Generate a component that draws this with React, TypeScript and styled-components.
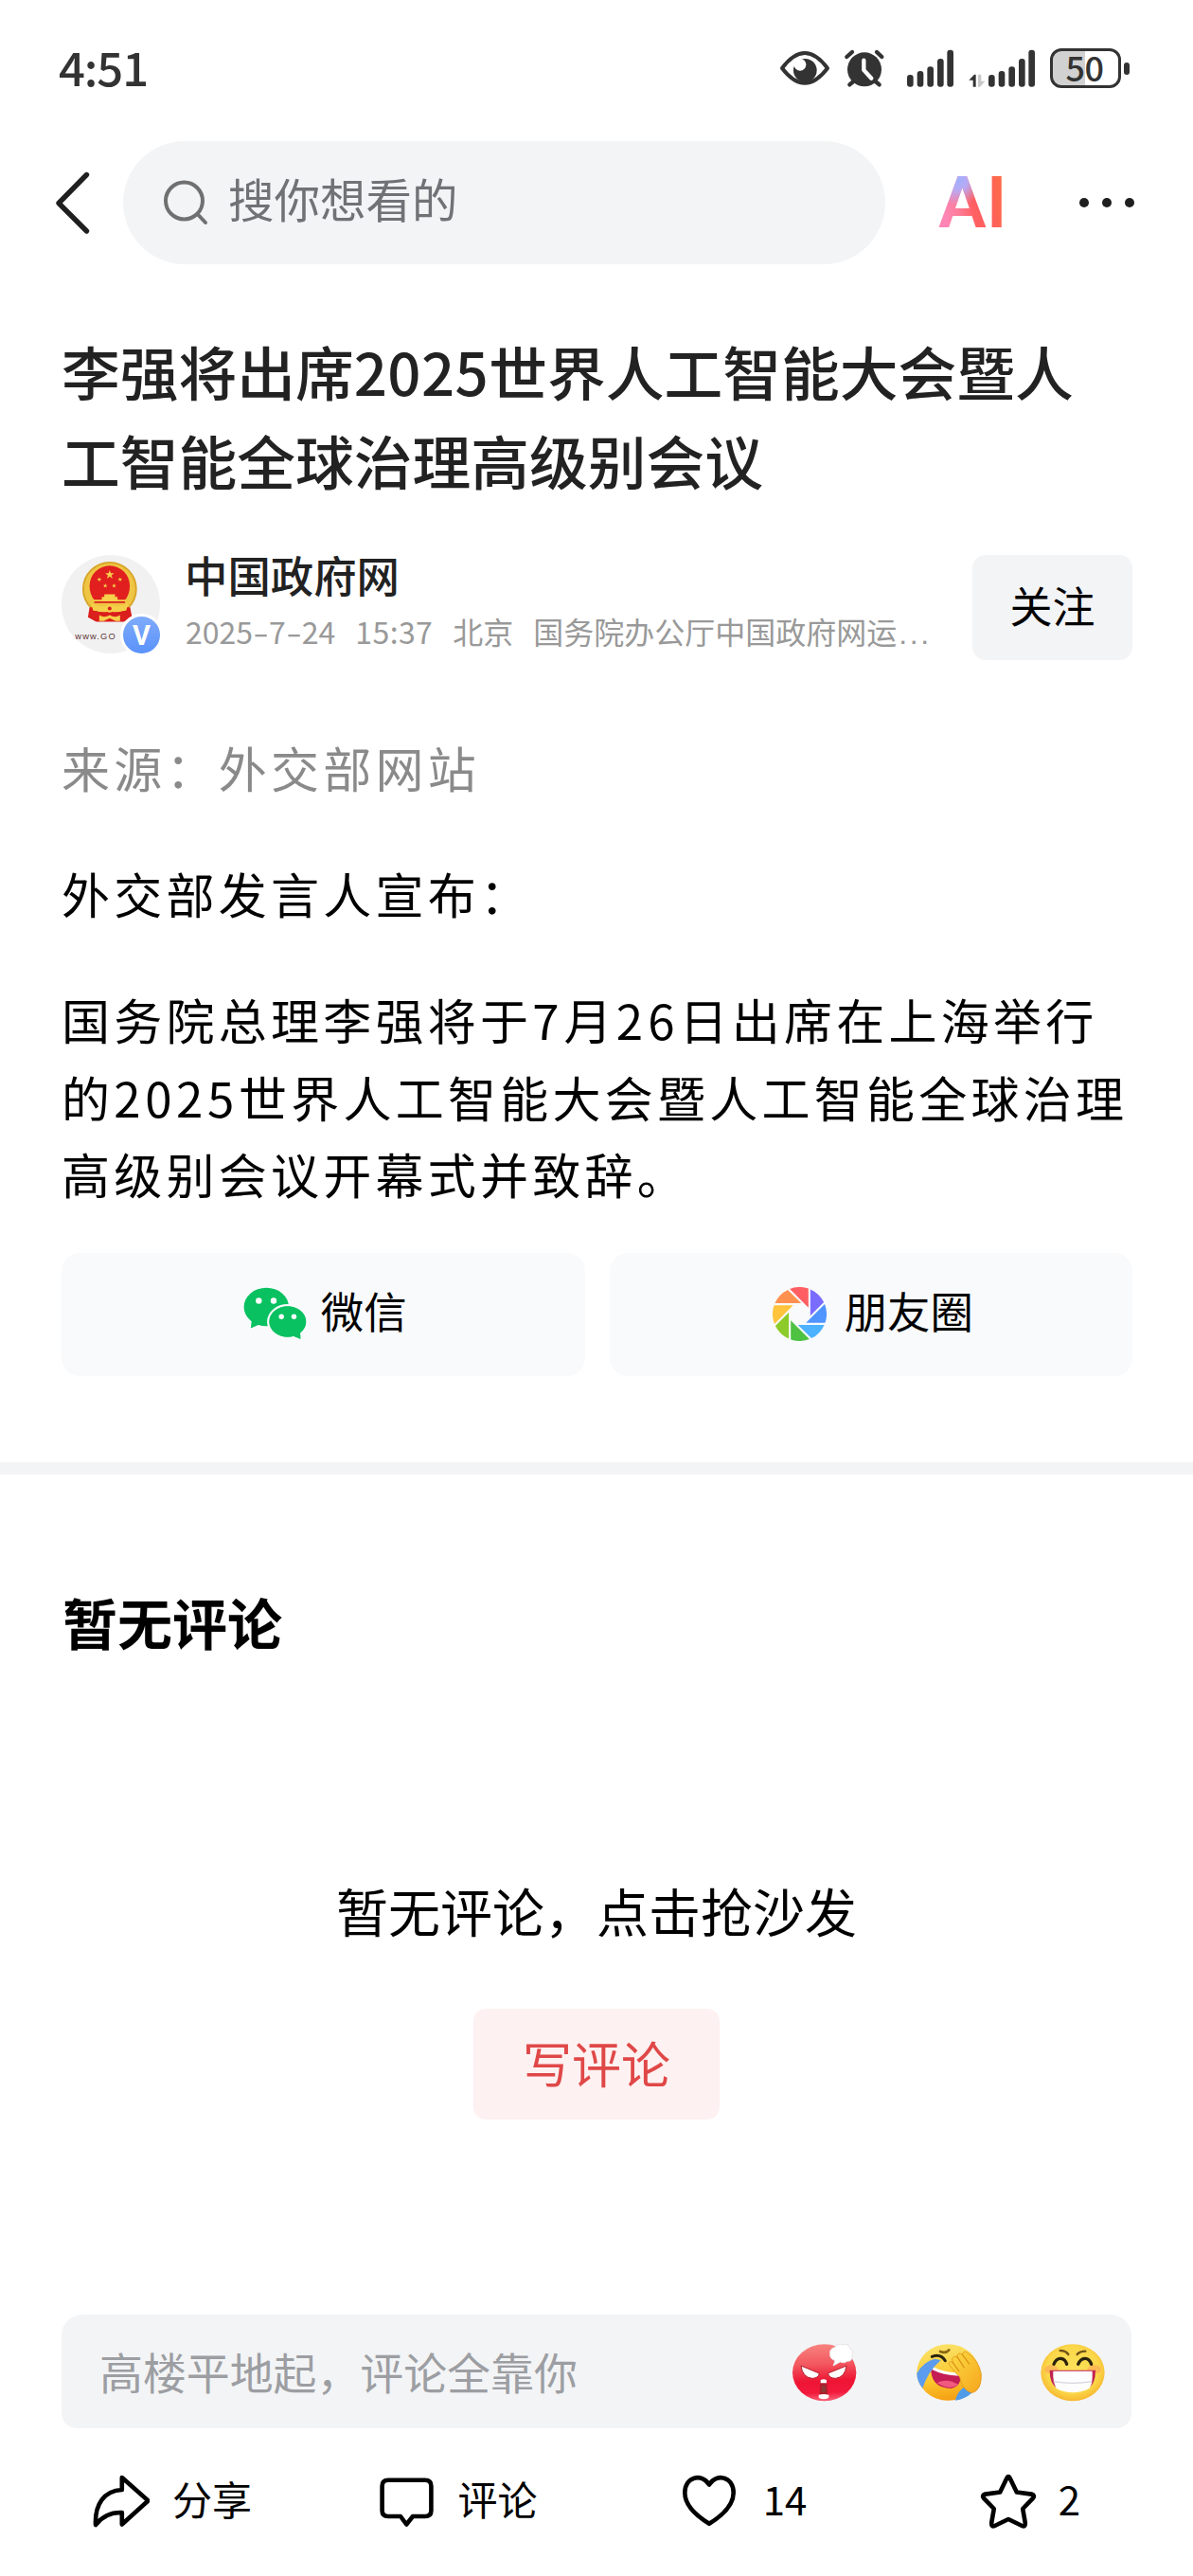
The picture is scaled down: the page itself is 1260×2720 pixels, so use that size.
import { Fragment } from "react";
import styled, { createGlobalStyle } from "styled-components";

const GlobalStyle = createGlobalStyle`
  * {
    box-sizing: border-box;
  }

  body {
    margin: 0;
    background: #fff;
    font-family: "Noto Sans CJK SC", "Noto Sans", sans-serif;
    color: #000;
  }

  svg {
    display: block;
    flex: none;
  }

  h1, h2, p {
    margin: 0;
  }

  button {
    border: 0;
    padding: 0;
    font-family: inherit;
    color: inherit;
  }
`;

const Page = styled.div`
  display: flex;
  flex-direction: column;
  width: 1260px;
  height: 2720px;
  overflow: hidden;
`;

// status bar
const StatusBar = styled.div`
  display: flex;
  align-items: center;
  justify-content: space-between;
  height: 144px;
  padding: 0 67px 0 62px;
  color: #333;
`;

const Clock = styled.span`
  padding-bottom: 4px;
  font-size: 49px;
  font-weight: 500;
  line-height: 60px;
  letter-spacing: -1.1px;
`;

const StatusIcons = styled.div`
  display: flex;
  align-items: center;
`;

const StatusSvg = styled.svg<{ $gap: number }>`
  height: 44px;
  margin-left: ${(props) => props.$gap}px;
`;

const Battery = styled.div`
  display: flex;
  align-items: center;
  gap: 3px;
  margin-left: 16px;

  &::after {
    content: "";
    width: 6px;
    height: 13px;
    border-radius: 3px;
    background: #333;
  }
`;

const BatteryLevel = styled.span`
  width: 75px;
  height: 42px;
  padding-right: 2px;
  border: 3px solid #333;
  border-radius: 12px;
  background: linear-gradient(90deg, #d1d1d1 50%, #fff 50%);
  font-size: 36px;
  font-weight: 500;
  line-height: 32px;
  letter-spacing: -0.5px;
  text-align: center;
`;

// header with search
const Header = styled.header`
  display: flex;
  align-items: center;
  margin-top: 5px;
  height: 130px;
  padding: 0 62px 0 55px;
`;

const SearchBox = styled.div`
  display: flex;
  align-items: center;
  width: 805px;
  height: 130px;
  margin-left: 31px;
  padding-left: 41px;
  border-radius: 65px;
  background: #f3f4f6;
  color: #707276;
  font-size: 48.5px;
  line-height: 70px;
`;

const SearchText = styled.span`
  margin-left: 18px;
  padding-bottom: 10px;
`;

const AiLabel = styled.span`
  width: 72px;
  margin-left: 56px;
  font-family: Roboto, "Liberation Sans", sans-serif;
  font-size: 76px;
  font-weight: 600;
  line-height: 76px;
  background:
    radial-gradient(circle at 28% 18%, #9fb0ff 0, #b9a9f2 14%, rgba(229, 154, 216, 0) 34%),
    linear-gradient(80deg, #ff86b4 14%, #ff7d9c 30%, #ff6062 50%, #ff5f5c 68%, #ff6d45 95%);
  background-clip: text;
  -webkit-background-clip: text;
  color: transparent;
`;

const MoreDots = styled.div`
  display: flex;
  gap: 14px;
  margin-left: auto;

  i {
    width: 10px;
    height: 10px;
    border-radius: 50%;
    background: #1f1f1f;
  }
`;

// article
const Article = styled.main`
  padding: 66px 64px 0 65px;
`;

const Title = styled.h1`
  font-size: 61.75px;
  font-weight: 500;
  line-height: 93.5px;
  color: #222;
  white-space: nowrap;
`;

const Digits = styled.span<{ $spacing: number }>`
  letter-spacing: ${(props) => props.$spacing}px;
`;

const AuthorRow = styled.div`
  display: flex;
  align-items: flex-start;
  margin-top: 54px;
`;

const AvatarWrap = styled.div`
  position: relative;
  width: 104px;
  height: 104px;
`;

const VerifiedBadge = styled.span`
  position: absolute;
  right: -3px;
  bottom: -3px;
  width: 45px;
  height: 45px;
  border: 3px solid #fff;
  border-radius: 50%;
  background: linear-gradient(#7fabfa, #5a92fb);
  color: #fff;
  font-family: Roboto, sans-serif;
  font-size: 29px;
  font-weight: 700;
  line-height: 40px;
  text-align: center;
`;

const AuthorInfo = styled.div`
  flex: 1;
  margin-left: 26px;
`;

const AuthorName = styled.div`
  font-size: 45.4px;
  font-weight: 500;
  line-height: 40px;
  color: #222;
`;

const Meta = styled.div`
  display: flex;
  gap: 21px;
  margin: 20px 0 0 1px;
  font-size: 32px;
  line-height: 40px;
  color: #999;
  white-space: nowrap;
`;

const Dash = styled.span`
  display: inline-block;
  width: 17px;
  text-align: center;
  transform: scaleX(1.5);
`;

const Dots = styled.span`
  margin-left: 2px;
  font-family: "Liberation Sans", sans-serif;
  letter-spacing: 2.6px;
`;

const FollowButton = styled.button`
  width: 169px;
  height: 111px;
  padding-bottom: 5px;
  border-radius: 14px;
  background: #f3f4f6;
  font-size: 45px;
  line-height: 60px;
`;

const Paragraph = styled.p<{ $muted?: boolean; $first?: boolean }>`
  margin-top: ${(props) => (props.$first ? 73 : 51.5)}px;
  font-size: 51px;
  line-height: 81.5px;
  letter-spacing: 4.25px;
  white-space: nowrap;
  color: ${(props) => (props.$muted ? "#8a8a8a" : "#000")};
`;

const ShareRow = styled.div`
  display: grid;
  grid-template-columns: 1fr 1fr;
  gap: 26px;
  margin-top: 42px;
`;

const ShareButton = styled.button<{ $gap: number }>`
  display: flex;
  align-items: center;
  justify-content: center;
  gap: ${(props) => props.$gap}px;
  height: 130px;
  padding-left: 4px;
  border-radius: 19px;
  background: #f9fafc;
  font-size: 45.4px;
  line-height: 60px;

  span {
    padding-bottom: 9px;
  }
`;

const Divider = styled.div`
  flex: none;
  height: 13px;
  margin-top: 91px;
  background: #f3f4f6;
`;

// comments
const Comments = styled.section`
  display: flex;
  flex-direction: column;
  padding: 115px 65px 0;
`;

const CommentsTitle = styled.h2`
  padding-left: 1px;
  font-size: 58px;
  font-weight: 700;
  line-height: 80px;
`;

const EmptyText = styled.p`
  margin-top: 224px;
  font-size: 55px;
  line-height: 80px;
  text-align: center;
`;

const WriteButton = styled.button`
  align-self: center;
  width: 260px;
  height: 117px;
  margin-top: 65px;
  padding-bottom: 2px;
  border-radius: 13px;
  background: #fef1f1;
  color: #e04848;
  font-size: 52px;
  line-height: 70px;
`;

// bottom bar
const Footer = styled.footer`
  margin-top: auto;
`;

const CommentInput = styled.div`
  display: flex;
  align-items: center;
  height: 120px;
  margin: 0 65px;
  padding: 0 27px 0 40px;
  border-radius: 22px 22px 16px 16px;
  background: #f3f4f6;
`;

const Placeholder = styled.span`
  flex: 1;
  padding-bottom: 2px;
  font-size: 45.9px;
  line-height: 60px;
  color: #9c9ea2;
`;

const EmojiList = styled.div`
  display: flex;
  gap: 61px;
  padding-top: 3px;
`;

const Actions = styled.nav`
  display: grid;
  grid-template-columns: repeat(4, 302px);
  height: 156px;
  padding: 0 0 4px 30px;
`;

const Action = styled.div<{ $gap: number }>`
  display: flex;
  align-items: center;
  justify-content: center;
  gap: ${(props) => props.$gap}px;
  padding-left: 1px;
  font-size: 42px;
  line-height: 60px;

  span {
    padding-bottom: 5px;
  }
`;

const signalBars = [
  { x: 0, top: 87 },
  { x: 32, top: 75 },
  { x: 64, top: 61 },
  { x: 96, top: 36 },
  { x: 127, top: 8 },
];

function Signal({ gap }: { gap: number }) {
  return (
    <StatusSvg $gap={gap} width="49" viewBox="0 0 147 132">
      {signalBars.map((bar) => (
        <rect key={bar.x} x={bar.x} y={bar.top} width="20" height={125 - bar.top} rx="9" fill="#333" />
      ))}
    </StatusSvg>
  );
}

function EyeIcon() {
  return (
    <StatusSvg $gap={0} width="54" viewBox="72 60 162 132">
      <path
        d="M81 126C106 93 128 78 153 78C178 78 200 93 225 126C200 159 178 173 153 173C128 173 106 159 81 126Z"
        fill="#fff"
        stroke="#333"
        strokeWidth="12"
        strokeLinejoin="round"
      />
      <circle cx="154" cy="133" r="37" fill="#333" />
      <circle cx="138" cy="115" r="19" fill="#fff" />
    </StatusSvg>
  );
}

function AlarmIcon() {
  return (
    <StatusSvg $gap={14} width="44" viewBox="275 60 132 132">
      <circle cx="341" cy="130" r="54" fill="#333" />
      <g fill="none" stroke="#333" strokeWidth="13" strokeLinecap="round">
        <path d="M285 90L302 75M380 75L396 90M306 168L294 178M376 168L388 178" />
        <path d="M339 101V132L363 158" stroke="#fff" />
      </g>
    </StatusSvg>
  );
}

function DataArrows() {
  return (
    <StatusSvg $gap={16} width="18" viewBox="668 60 54 132">
      <path d="M691 185V146H686L669 164H682V185Z" fill="#333" />
      <path d="M698 146V185H704L720 167H708V146Z" fill="#c8c8c8" />
    </StatusSvg>
  );
}

function BackIcon() {
  return (
    <svg width="44" height="70" viewBox="0 0 44 70" fill="none" stroke="#1f1f1f" strokeWidth="5.4" strokeLinecap="round" strokeLinejoin="round">
      <path d="M36.5 5.5L7 35.5L36.5 65" />
    </svg>
  );
}

function SearchIcon() {
  return (
    <svg width="52" height="52" viewBox="0 0 52 52" fill="none" stroke="#707070" strokeWidth="4" strokeLinecap="round">
      <circle cx="23.5" cy="24" r="19.5" />
      <path d="M38 38.5L46 47" />
    </svg>
  );
}

const starPath = "M0 -10L2.4 -3.2H9.5L3.8 1L6 8L0 3.8L-6 8L-3.8 1L-9.5 -3.2H-2.4Z";

function EmblemAvatar() {
  return (
    <svg width="104" height="104" viewBox="14 14 313 313">
      <circle cx="170.5" cy="170.5" r="156.5" fill="#f1f1f2" />
      <circle cx="167" cy="122" r="87" fill="#d8a62a" />
      <circle cx="167" cy="122" r="81" fill="#efc643" />
      <path d="M103 112A64 64 0 0 1 231 112Q231 140 214 160H120Q103 140 103 112Z" fill="#e11f1f" />
      <path d="M103 180H232L238 212L212 226H124L98 212Z" fill="#da1f1c" />
      <g fill="#f6cf4b">
        <path d={starPath} transform="translate(167 77) scale(1.5)" />
        <path d={starPath} transform="translate(134 92) scale(.75)" />
        <path d={starPath} transform="translate(200 92) scale(.75)" />
        <path d={starPath} transform="translate(153 112) scale(.75)" />
        <path d={starPath} transform="translate(181 112) scale(.75)" />
        <path d="M150 139H184V147H192V156H218V163H116V156H142V147H150Z" />
        <path d="M108 166Q140 186 167 173Q194 186 226 166L220 190Q190 200 167 192Q144 200 114 190Z" />
        <circle cx="167" cy="184" r="13" />
        <path d="M134 205Q150 216 167 205Q184 216 200 205V224H186L167 215L148 224H134Z" />
      </g>
      <circle cx="167" cy="184" r="6" fill="#da1f1c" />
      <path d="M118 164H216M120 194Q167 208 214 194" fill="none" stroke="#da1f1c" strokeWidth="5" />
      <text x="57" y="283" fontFamily="Liberation Sans, sans-serif" fontSize="28" letterSpacing="3.4" fill="#5f3636">
        www.GO
      </text>
    </svg>
  );
}

function WechatIcon() {
  return (
    <svg width="68" height="57" viewBox="0 0 68 57">
      <g fill="#09c160">
        <ellipse cx="24.3" cy="21" rx="23.7" ry="20.3" />
        <path d="M9 34L7.8 43.5L17 39.5Z" />
        <ellipse cx="46.8" cy="36.5" rx="20.5" ry="17.2" stroke="#f9fafc" strokeWidth="2.5" />
        <path d="M53 52L60.5 55L60 47Z" />
        <ellipse cx="46.8" cy="36.5" rx="19.5" ry="16.2" />
      </g>
      <g fill="#fff">
        <circle cx="16.3" cy="14.5" r="3.2" />
        <circle cx="32" cy="14.5" r="3.2" />
        <circle cx="40.2" cy="31.3" r="2.7" />
        <circle cx="53.5" cy="31.3" r="2.7" />
      </g>
    </svg>
  );
}

const bladeColors = ["#7a6cff", "#4f94ff", "#4db2ff", "#4ec242", "#8ccb2a", "#ffc43c", "#ff9150", "#ff5f62"];

function MomentsIcon() {
  return (
    <svg width="57" height="57" viewBox="-28.5 -28.5 57 57">
      {bladeColors.map((color, i) => (
        <path
          key={color}
          d="M11.4 -26.1A28.5 28.5 0 0 1 25.6 -12.5L11.4 1.8Z"
          fill={color}
          transform={`rotate(${i * 45})`}
        />
      ))}
    </svg>
  );
}

function AngryEmoji() {
  return (
    <svg width="70" height="65" viewBox="50 55 210 195">
      <defs>
        <linearGradient id="angry" x1=".45" y1="0" x2=".5" y2="1">
          <stop offset="0" stopColor="#f8837f" />
          <stop offset=".35" stopColor="#f2575f" />
          <stop offset=".65" stopColor="#ee1434" />
          <stop offset=".85" stopColor="#f21a3c" />
          <stop offset="1" stopColor="#f9637a" />
        </linearGradient>
      </defs>
      <ellipse cx="154" cy="152" rx="101" ry="90" fill="url(#angry)" />
      <path d="M80 130L138 154Q136 170 114 170Q84 166 80 130Z" fill="#fff" stroke="#b51c2a" strokeWidth="3" />
      <path d="M224 130L165 154Q170 170 190 170Q220 166 224 130Z" fill="#fff" stroke="#b51c2a" strokeWidth="3" />
      <path d="M141 176Q152 170 161 176L166 226Q152 236 138 226Z" fill="#b01f2c" />
      <path d="M147 192H157L160 214H144Z" fill="#8c3a36" />
      <path d="M142 175Q152 170 161 175V185H142Z" fill="#fff" />
      <path d="M136 222Q152 218 168 222V231Q152 240 136 231Z" fill="#fff" />
      <path
        d="M182 130L188 114Q170 108 172 92Q170 76 186 72Q196 58 212 63Q230 58 236 76Q250 86 242 98Q244 116 226 116Q216 124 204 118Z"
        fill="#fff"
        stroke="#e9e3e6"
        strokeWidth="3"
      />
    </svg>
  );
}

function LaughEmoji() {
  return (
    <svg width="70" height="65" viewBox="440 55 210 195">
      <defs>
        <linearGradient id="laugh" x1=".3" y1="0" x2=".5" y2="1">
          <stop offset="0" stopColor="#fbe36b" />
          <stop offset=".6" stopColor="#fbc92f" />
          <stop offset="1" stopColor="#f59f12" />
        </linearGradient>
        <linearGradient id="palm" x1="0" y1="0" x2="1" y2="1">
          <stop offset="0" stopColor="#fbdc45" />
          <stop offset="1" stopColor="#f7a51c" />
        </linearGradient>
      </defs>
      <ellipse cx="543" cy="151" rx="99" ry="89" fill="url(#laugh)" />
      <path d="M566 240Q572 212 596 196L622 212Q600 236 566 240Z" fill="#4f9be8" />
      <path d="M494 134Q530 156 582 158Q586 196 552 202Q494 200 489 148Z" fill="#c41c55" />
      <path d="M496 134Q530 152 580 152L578 162Q526 160 492 142Z" fill="#fff" />
      <path d="M508 184Q540 168 576 190Q548 210 508 184Z" fill="#f05a7e" />
      <path d="M500 108Q464 118 444 154Q444 180 462 201Q478 150 520 112Z" fill="#5c9cee" />
      <path d="M492 101Q520 90 534 114" fill="none" stroke="#2c2410" strokeWidth="9" strokeLinecap="round" />
      <path d="M518 85Q536 92 546 80" fill="none" stroke="#8a6715" strokeWidth="8" strokeLinecap="round" />
      <path
        d="M544 122Q548 112 558 120L556 108Q562 96 572 104L572 96Q580 86 588 96Q590 80 604 88Q640 112 648 156Q650 208 618 216Q586 206 580 166Q558 146 544 122Z"
        fill="url(#palm)"
        stroke="#e2961a"
        strokeWidth="2.5"
      />
      <path d="M558 120L578 148M572 102L594 136M588 94L610 124" fill="none" stroke="#d98c12" strokeWidth="3.5" strokeLinecap="round" />
    </svg>
  );
}

function GrinEmoji() {
  return (
    <svg width="70" height="65" viewBox="835 55 210 195">
      <defs>
        <radialGradient id="grin" cx=".5" cy=".45" r=".58">
          <stop offset="0" stopColor="#fce25a" />
          <stop offset=".7" stopColor="#fbd84a" />
          <stop offset="1" stopColor="#f6b02b" />
        </radialGradient>
      </defs>
      <ellipse cx="940" cy="152" rx="101" ry="90" fill="url(#grin)" />
      <ellipse cx="872" cy="142" rx="22" ry="14" fill="#ff9a5c" opacity=".5" />
      <ellipse cx="1008" cy="142" rx="22" ry="14" fill="#ff9a5c" opacity=".5" />
      <path d="M867 144H1012Q1012 190 988 202H892Q866 188 867 144Z" fill="#c12350" />
      <path d="M878 147H1002Q1004 190 992 202Q940 228 888 202Q876 180 878 147Z" fill="#fdfdfd" />
      <path d="M879 180Q940 190 1001 180" fill="none" stroke="#d4d6dc" strokeWidth="4" />
      <g fill="none" strokeLinecap="round">
        <path d="M880 125Q888 106 902 107Q916 108 921 125M957 125Q964 108 978 107Q992 106 999 125" stroke="#2c240e" strokeWidth="10" />
        <path d="M900 82Q918 82 926 94M954 94Q962 84 980 84" stroke="#715316" strokeWidth="7" />
      </g>
    </svg>
  );
}

const actions = [
  {
    label: "分享",
    gap: 24,
    path: "M31.8 6L59.5 30.5L31.8 55.5V43C19 42.5 11 47 4 56C3 34 13 20 31.8 19Z",
  },
  {
    label: "评论",
    gap: 23,
    path: "M11 8.7H50Q56.4 8.7 56.4 15V41Q56.4 47 50 47H37L30.3 55.5L24 47H11Q4.6 47 4.6 41V15Q4.6 8.7 11 8.7Z",
  },
  {
    label: "14",
    gap: 26,
    path: "M30 13.5C22 1 4.3 5 4.3 22C4.3 37 19 48 30 54.7C41 48 55.7 37 55.7 22C55.7 5 38 1 30 13.5Z",
  },
  {
    label: "2",
    gap: 23,
    path: "M29.2 7Q31 3 32.8 7L39.8 21.5L55.5 23.6Q59.5 24.6 57 27.8L46.2 39L48.8 54Q49 58.5 45.4 57L31 50L16.6 57Q13 58.5 13.2 54L15.8 39L5 27.8Q2.5 24.6 6.5 23.6L22.2 21.5Z",
  },
];

export default function App() {
  return (
    <>
      <GlobalStyle />
      <Page>
        <StatusBar>
          <Clock>4:51</Clock>
          <StatusIcons>
            <EyeIcon />
            <AlarmIcon />
            <Signal gap={23} />
            <DataArrows />
            <Signal gap={3} />
            <Battery>
              <BatteryLevel>50</BatteryLevel>
            </Battery>
          </StatusIcons>
        </StatusBar>

        <Header>
          <BackIcon />
          <SearchBox>
            <SearchIcon />
            <SearchText>搜你想看的</SearchText>
          </SearchBox>
          <AiLabel>AI</AiLabel>
          <MoreDots>
            <i />
            <i />
            <i />
          </MoreDots>
        </Header>

        <Article>
          <Title>
            李强将出席<Digits $spacing={0.4}>2025</Digits>世界人工智能大会暨人
            <br />
            工智能全球治理高级别会议
          </Title>
          <AuthorRow>
            <AvatarWrap>
              <EmblemAvatar />
              <VerifiedBadge>V</VerifiedBadge>
            </AvatarWrap>
            <AuthorInfo>
              <AuthorName>中国政府网</AuthorName>
              <Meta>
                <span>
                  {["2025", "7", "24"].map((part, i) => (
                    <Fragment key={part}>
                      {i > 0 && <Dash>-</Dash>}
                      {part}
                    </Fragment>
                  ))}
                </span>
                <Digits $spacing={0.4}>15:37</Digits>
                <span>北京</span>
                <span>
                  国务院办公厅中国政府网运<Dots>...</Dots>
                </span>
              </Meta>
            </AuthorInfo>
            <FollowButton>关注</FollowButton>
          </AuthorRow>

          <Paragraph $first $muted>
            来源：外交部网站
          </Paragraph>
          <Paragraph>外交部发言人宣布：</Paragraph>
          <Paragraph>
            国务院总理李强将于<Digits $spacing={5}>7</Digits>月<Digits $spacing={5}>26</Digits>日出席在上海举行
            <br />
            的<Digits $spacing={4.6}>2025</Digits>世界人工智能大会暨人工智能全球治理
            <br />
            高级别会议开幕式并致辞。
          </Paragraph>

          <ShareRow>
            <ShareButton $gap={14}>
              <WechatIcon />
              <span>微信</span>
            </ShareButton>
            <ShareButton $gap={19}>
              <MomentsIcon />
              <span>朋友圈</span>
            </ShareButton>
          </ShareRow>
        </Article>

        <Divider />

        <Comments>
          <CommentsTitle>暂无评论</CommentsTitle>
          <EmptyText>暂无评论，点击抢沙发</EmptyText>
          <WriteButton>写评论</WriteButton>
        </Comments>

        <Footer>
          <CommentInput>
            <Placeholder>高楼平地起，评论全靠你</Placeholder>
            <EmojiList>
              <AngryEmoji />
              <LaughEmoji />
              <GrinEmoji />
            </EmojiList>
          </CommentInput>
          <Actions>
            {actions.map((action) => (
              <Action key={action.label} $gap={action.gap}>
                <svg width="61" height="61" viewBox="0 0 61 61" fill="none" stroke="#000" strokeWidth="4.6" strokeLinejoin="round">
                  <path d={action.path} />
                </svg>
                <span>{action.label}</span>
              </Action>
            ))}
          </Actions>
        </Footer>
      </Page>
    </>
  );
}
